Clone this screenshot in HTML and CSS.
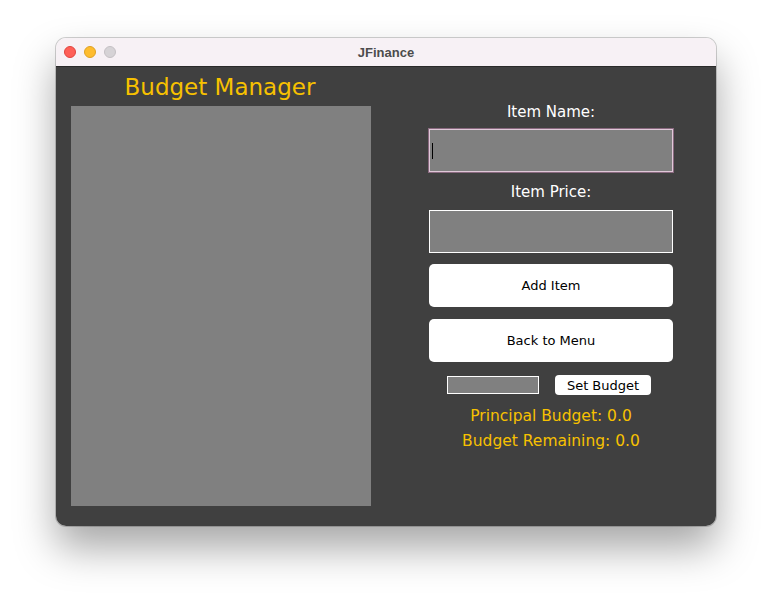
FILE: index.html
```html
<!DOCTYPE html>
<html>
<head>
<meta charset="utf-8">
<link rel="stylesheet" href="styles.css">
</head>
<body>
<div class="window">
  <div class="titlebar">
    <div class="lights">
      <span class="light red"></span>
      <span class="light yellow"></span>
      <span class="light gray"></span>
    </div>
    <div class="title">JFinance</div>
  </div>
  <div class="content">
    <div class="left">
      <div class="heading">Budget Manager</div>
      <div class="list"></div>
    </div>
    <div class="right">
      <div class="label">Item Name:</div>
      <div class="field focused first"><span class="caret"></span></div>
      <div class="label">Item Price:</div>
      <div class="field second"></div>
      <div class="button">Add Item</div>
      <div class="button">Back to Menu</div>
      <div class="budget-row">
        <div class="small-field"></div>
        <div class="small-button">Set Budget</div>
      </div>
      <div class="stat">Principal Budget: 0.0</div>
      <div class="stat">Budget Remaining: 0.0</div>
    </div>
  </div>
</div>
</body>
</html>
```
FILE: styles.css
```css
html, body {
  margin: 0;
  padding: 0;
  background: #ffffff;
  width: 772px;
  height: 600px;
  overflow: hidden;
}
body {
  padding: 38px 0 0 56px;
  box-sizing: border-box;
  font-family: "DejaVu Sans", sans-serif;
}
.window {
  width: 660px;
  height: 488px;
  border-radius: 10px;
  overflow: hidden;
  box-shadow: 0 0 0 1px rgba(0,0,0,0.18), 0 22px 40px rgba(0,0,0,0.35);
  display: flex;
  flex-direction: column;
}
.titlebar {
  height: 28px;
  background: #f7f1f5;
  border-bottom: 1px solid #2a2a2a;
  display: flex;
  align-items: center;
  position: relative;
}
.lights {
  display: flex;
  gap: 8px;
  padding-left: 8px;
}
.light {
  width: 12px;
  height: 12px;
  border-radius: 50%;
  box-sizing: border-box;
}
.red { background: #fe5f57; border: 1px solid #e0443e; }
.yellow { background: #febc2e; border: 1px solid #dea123; }
.gray { background: #d6d3d6; border: 1px solid #c4c0c4; }
.title {
  position: absolute;
  left: 0;
  right: 0;
  text-align: center;
  font-family: "Liberation Sans", sans-serif;
  font-weight: bold;
  font-size: 13px;
  color: #4c4c4c;
}
.content {
  flex: 1;
  background: #404040;
  display: flex;
  padding-left: 15px;
}
.left {
  width: 300px;
  display: flex;
  flex-direction: column;
}
.heading {
  height: 39px;
  color: #f7c100;
  font-size: 23px;
  line-height: 40px;
  text-align: center;
  padding-right: 2px;
  box-sizing: border-box;
}
.list {
  width: 300px;
  height: 400px;
  background: #808080;
}
.right {
  margin-left: 58px;
  width: 244px;
  display: flex;
  flex-direction: column;
  align-items: center;
  padding-top: 35px;
}
.label {
  color: #ffffff;
  font-size: 15px;
  line-height: 20px;
  height: 20px;
}
.field {
  width: 244px;
  height: 43px;
  box-sizing: border-box;
  background: #808080;
  border: 1px solid #ffffff;
  display: flex;
  align-items: center;
}
.field.first {
  margin-top: 7px;
  margin-bottom: 10px;
}
.field.second {
  margin-top: 8px;
  margin-bottom: 9px;
}
.field.focused {
  border: 1px solid #e0c8d8;
  box-shadow: 0 0 0 1px #8a6a80;
}
.caret {
  width: 1px;
  height: 16px;
  background: #000000;
  margin-left: 2px;
}
.button {
  width: 244px;
  height: 43px;
  background: #ffffff;
  border-radius: 5px;
  color: #000000;
  font-size: 13px;
  display: flex;
  align-items: center;
  justify-content: center;
  margin-top: 2px;
  margin-bottom: 10px;
}
.button + .button { margin-top: 2px; }
.budget-row {
  display: flex;
  align-items: center;
  gap: 16px;
  margin-top: 3px;
  margin-bottom: 9px;
  margin-right: 4px;
}
.small-field {
  width: 92px;
  height: 18px;
  box-sizing: border-box;
  background: #808080;
  border: 1px solid #ffffff;
}
.small-button {
  width: 96px;
  height: 20px;
  background: #ffffff;
  border-radius: 4px;
  font-size: 13px;
  color: #000000;
  display: flex;
  align-items: center;
  justify-content: center;
}
.stat {
  color: #f7c100;
  font-size: 15.5px;
  line-height: 25px;
}
```
